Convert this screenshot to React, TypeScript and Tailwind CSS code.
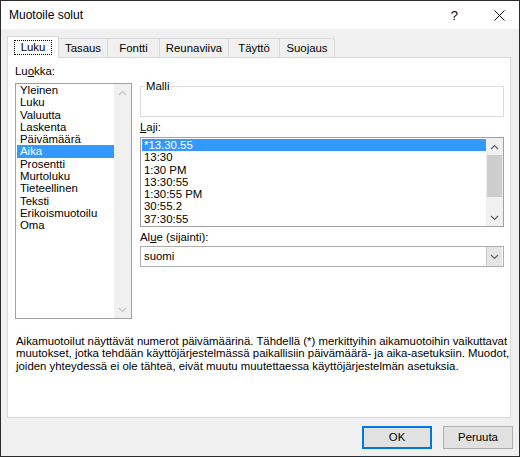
import React from "react";

const CATEGORIES = [
  "Yleinen",
  "Luku",
  "Valuutta",
  "Laskenta",
  "Päivämäärä",
  "Aika",
  "Prosentti",
  "Murtoluku",
  "Tieteellinen",
  "Teksti",
  "Erikoismuotoilu",
  "Oma",
];

const TYPES = ["*13.30.55", "13:30", "1:30 PM", "13:30:55", "1:30:55 PM", "30:55.2", "37:30:55"];

const TABS = [
  { label: "Tasaus", w: "w-[49px]" },
  { label: "Fontti", w: "w-[52px]" },
  { label: "Reunaviiva", w: "w-[69px]" },
  { label: "Täyttö", w: "w-[51px]" },
  { label: "Suojaus", w: "w-[55px]" },
];

function Chevron({ dir, color }: { dir: "up" | "down"; color: string }) {
  return (
    <svg width="9" height="6" viewBox="0 0 9 6" aria-hidden="true">
      <path
        d={dir === "up" ? "M1 5 L4.5 1.5 L8 5" : "M1 1 L4.5 4.5 L8 1"}
        fill="none"
        stroke={color}
        strokeWidth="1.2"
      />
    </svg>
  );
}

export default function App() {
  return (
    <div className="w-[520px] h-[457px] border border-[#2b2b2b] bg-[#f0f0f0] flex flex-col text-black font-['Liberation_Sans',sans-serif] text-[11.4px] leading-[13px]">
      {/* Title bar */}
      <div className="h-[28px] bg-white flex items-center pl-[8px] pr-[14px]">
        <span className="text-[12px]">Muotoile solut</span>
        <span className="ml-auto text-[13px] mr-[36px]">?</span>
        <svg width="11" height="11" viewBox="0 0 11 11" aria-hidden="true">
          <path d="M0.5 0.5 L10.5 10.5 M10.5 0.5 L0.5 10.5" stroke="#111" strokeWidth="1" />
        </svg>
      </div>

      {/* Body */}
      <div className="flex-1 flex flex-col pl-[6px] pr-[6px] pt-[7px]">
        {/* Tabs */}
        <div className="flex items-end h-[21px]">
          <div className="relative z-10 w-[52px] h-[22px] -mb-px bg-white border-l border-t border-r border-[#d9d9d9] flex items-center justify-center">
            <span className="border border-dotted border-black px-[6px] h-[15px] leading-[13px]">Luku</span>
          </div>
          {TABS.map((t) => (
            <div
              key={t.label}
              className={`${t.w} h-[19px] border-t border-r border-[#d9d9d9] flex items-center justify-center`}
            >
              {t.label}
            </div>
          ))}
        </div>

        {/* Panel */}
        <div className="w-[504px] h-[361px] border border-[#d9d9d9] bg-white flex flex-col pl-[7px] pr-[6px] pt-[7px]">
          <div className="flex gap-[8px]">
            {/* Luokka */}
            <div className="w-[117px] flex flex-col">
              <div className="h-[13px]">
                Lu<span className="underline">o</span>kka:
              </div>
              <div className="mt-[5px] h-[236px] border border-[#a0a0a0] flex">
                <div className="flex-1 flex flex-col pl-[1px]">
                  {CATEGORIES.map((c) => (
                    <div
                      key={c}
                      className={`h-[12.3px] leading-[12.3px] pl-[3px] ${c === "Aika" ? "bg-[#3399ff] text-white" : ""}`}
                    >
                      {c}
                    </div>
                  ))}
                </div>
                <div className="w-[17px] bg-[#f0f0f0] flex flex-col items-center">
                  <div className="h-[17px] flex items-center justify-center">
                    <Chevron dir="up" color="#c4c4c4" />
                  </div>
                  <div className="flex-1" />
                  <div className="h-[17px] flex items-center justify-center">
                    <Chevron dir="down" color="#c4c4c4" />
                  </div>
                </div>
              </div>
            </div>

            {/* Right column */}
            <div className="flex-1 flex flex-col">
              <fieldset className="mt-[15px] h-[37px] border border-[#dcdcdc]">
                <legend className="ml-[4px] px-[1px] leading-[13px]">Malli</legend>
              </fieldset>

              <div className="mt-[4px] h-[13px]">
                <span className="underline">L</span>aji:
              </div>
              <div className="mt-[3px] h-[90px] border border-[#a0a0a0] flex">
                <div className="flex-1 flex flex-col pt-[1px] pl-[1px]">
                  {TYPES.map((t, i) => (
                    <div
                      key={t}
                      className={`h-[12.3px] leading-[12.3px] pl-[2px] ${i === 0 ? "bg-[#3399ff] text-white" : ""}`}
                    >
                      {t}
                    </div>
                  ))}
                </div>
                <div className="w-[17px] bg-[#f0f0f0] flex flex-col">
                  <div className="h-[17px] flex items-center justify-center">
                    <Chevron dir="up" color="#606060" />
                  </div>
                  <div className="mx-[1px] h-[42px] bg-[#cdcdcd]" />
                  <div className="flex-1" />
                  <div className="h-[17px] flex items-center justify-center">
                    <Chevron dir="down" color="#606060" />
                  </div>
                </div>
              </div>

              <div className="mt-[4px] h-[13px]">
                Al<span className="underline">u</span>e (sijainti):
              </div>
              <div className="mt-[2px] h-[21px] border border-[#adadad] flex items-center">
                <span className="pl-[3px] flex-1">suomi</span>
                <div className="w-[16px] h-[19px] mr-[1px] bg-[#e5e5e5] border-l border-[#c8c8c8] flex items-center justify-center">
                  <Chevron dir="down" color="#606060" />
                </div>
              </div>
            </div>
          </div>

          <p className="mt-[16px] pl-[1px] leading-[12.3px] whitespace-nowrap">
            Aikamuotoilut näyttävät numerot päivämäärinä. Tähdellä (*) merkittyihin aikamuotoihin vaikuttavat
            <br />
            muutokset, jotka tehdään käyttöjärjestelmässä paikallisiin päivämäärä- ja aika-asetuksiin. Muodot,
            <br />
            joiden yhteydessä ei ole tähteä, eivät muutu muutettaessa käyttöjärjestelmän asetuksia.
          </p>
        </div>

        {/* Buttons */}
        <div className="mt-[8px] flex justify-end gap-[11px]">
          <button className="w-[70px] h-[23px] border-2 border-[#0078d7] bg-[#e1e1e1] text-[11.4px]">OK</button>
          <button className="w-[70px] h-[23px] border border-[#adadad] bg-[#e1e1e1] text-[11.4px]">Peruuta</button>
        </div>
      </div>
    </div>
  );
}
